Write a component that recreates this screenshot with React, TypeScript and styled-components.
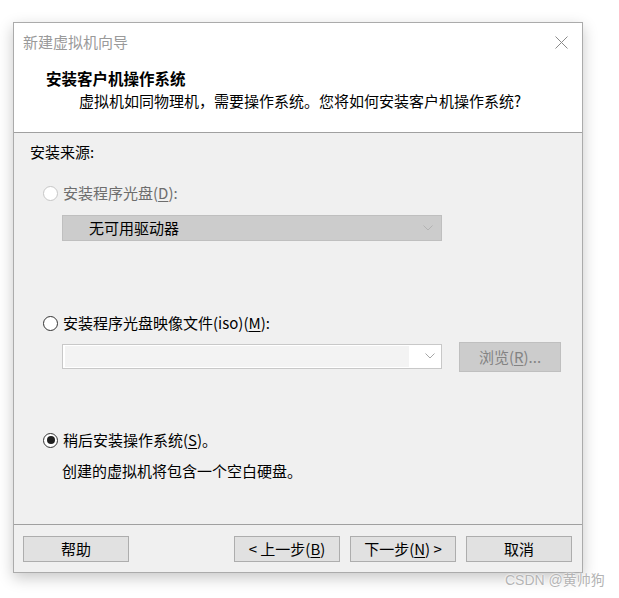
import React from "react";
import styled, { createGlobalStyle } from "styled-components";

const GlobalStyle = createGlobalStyle`
  html, body { margin: 0; padding: 0; background: #ffffff; }
  body { font-family: "Noto Sans CJK SC", "Microsoft YaHei", sans-serif; }
`;

const FONT = `"Noto Sans CJK SC", "Noto Sans", sans-serif`;

const Page = styled.div`
  position: relative;
  width: 619px;
  height: 598px;
  padding: 22px 0 0 13px;
  box-sizing: border-box;
  font-family: ${FONT};
`;

const Window = styled.div`
  width: 570px;
  height: 551px;
  box-sizing: border-box;
  border: 1px solid #ababab;
  box-shadow: 0 5px 14px rgba(0, 0, 0, 0.22);
  display: flex;
  flex-direction: column;
  background: #f0f0f0;
`;

const Header = styled.div`
  background: #ffffff;
  border-bottom: 1px solid #a0a0a0;
  padding-bottom: 20px;
  display: flex;
  flex-direction: column;
`;

const TitleBar = styled.div`
  height: 38px;
  display: flex;
  align-items: center;
  justify-content: space-between;
  padding: 0 14px 0 9px;
`;

const TitleText = styled.span`
  font-size: 15px;
  color: #9a9a9a;
  line-height: 20px;
`;

const Heading = styled.div`
  margin: 6px 0 0 32px;
  font-size: 15.5px;
  font-weight: 700;
  line-height: 22px;
  color: #000;
`;

const Desc = styled.div`
  margin: 1px 0 0 65px;
  font-size: 15px;
  line-height: 22px;
  color: #000;
`;

const Body = styled.div`
  flex: 1;
  display: flex;
  flex-direction: column;
  padding: 9px 0 0 16px;
`;

const Label = styled.div<{ $top?: number; $left?: number; $disabled?: boolean }>`
  margin-top: ${(p) => p.$top ?? 0}px;
  margin-left: ${(p) => p.$left ?? 0}px;
  font-size: 15px;
  line-height: 20px;
  color: ${(p) => (p.$disabled ? "#6d6d6d" : "#000")};
`;

const RadioRow = styled.div<{ $top: number; $disabled?: boolean }>`
  margin-top: ${(p) => p.$top}px;
  margin-left: 13px;
  display: flex;
  align-items: center;
  gap: 5px;
  font-size: 15px;
  line-height: 20px;
  color: ${(p) => (p.$disabled ? "#6d6d6d" : "#000")};
`;

const RadioCircle = styled.span<{ $checked?: boolean; $disabled?: boolean }>`
  width: 15px;
  height: 15px;
  box-sizing: border-box;
  border-radius: 50%;
  border: 1px solid ${(p) => (p.$disabled ? "#c6c6c6" : "#333333")};
  background: #ffffff;
  display: flex;
  align-items: center;
  justify-content: center;
  flex: none;
  &::after {
    content: "";
    display: ${(p) => (p.$checked ? "block" : "none")};
    width: 8px;
    height: 8px;
    border-radius: 50%;
    background: #1f1f1f;
  }
`;

const U = styled.span`
  text-decoration: underline;
  text-underline-offset: 2px;
`;

const Combo = styled.div<{ $disabled?: boolean; $top: number }>`
  margin-top: ${(p) => p.$top}px;
  margin-left: 32px;
  width: 380px;
  height: ${(p) => (p.$disabled ? 26 : 25)}px;
  box-sizing: border-box;
  border: 1px solid ${(p) => (p.$disabled ? "#bfbfbf" : "#c8c8c8")};
  background: ${(p) => (p.$disabled ? "#cccccc" : "#ffffff")};
  display: flex;
  align-items: center;
  padding: 0 ${(p) => (p.$disabled ? 8 : 6)}px 0 ${(p) => (p.$disabled ? 26 : 2)}px;
  font-size: 15px;
  color: #000;
  flex: none;
`;

const ComboText = styled.span`
  flex: 1;
  line-height: 20px;
`;

const ComboEdit = styled.span`
  flex: 1;
  height: 21px;
  background: #f3f3f3;
  margin-right: 16px;
`;

const FileRow = styled.div`
  margin-top: 9px;
  display: flex;
  align-items: center;
  gap: 17px;
`;

const FileCombo = styled(Combo)`
  margin-top: 0;
  margin-bottom: 2px;
`;

const Button = styled.button<{ $disabled?: boolean; $w?: number; $h?: number }>`
  width: ${(p) => p.$w ?? 106}px;
  height: ${(p) => p.$h ?? 26}px;
  box-sizing: border-box;
  border: 1px solid ${(p) => (p.$disabled ? "#bfbfbf" : "#adadad")};
  background: ${(p) => (p.$disabled ? "#cccccc" : "#e1e1e1")};
  color: ${(p) => (p.$disabled ? "#838383" : "#000")};
  font-family: ${FONT};
  font-size: 15px;
  line-height: 20px;
  padding: 0;
  margin: 0;
  display: flex;
  align-items: center;
  justify-content: center;
  flex: none;
  white-space: pre;
`;

const Footer = styled.div`
  border-top: 1px solid #a0a0a0;
  height: 48px;
  box-sizing: border-box;
  padding: 11px 10px 0 9px;
  display: flex;
  gap: 10px;
`;

const Spacer = styled.div`
  flex: 1;
`;

const Watermark = styled.div`
  position: absolute;
  left: 505px;
  top: 571px;
  font-family: "Liberation Sans", "Noto Sans CJK SC", sans-serif;
  font-size: 14px;
  line-height: 18px;
  color: #b4b4b4;
  text-shadow: 0 0 2px #fff, 0 0 2px #fff;
  white-space: nowrap;
`;

const Chevron = ({ color }: { color: string }) => (
  <svg width="10" height="6" viewBox="0 0 10 6" style={{ flex: "none" }}>
    <path d="M0.5 0.5 L5 5 L9.5 0.5" fill="none" stroke={color} strokeWidth="1" />
  </svg>
);

const CloseIcon = () => (
  <svg width="13" height="13" viewBox="0 0 13 13">
    <path d="M0.5 0.5 L12.5 12.5 M12.5 0.5 L0.5 12.5" stroke="#8a8a8a" strokeWidth="1" />
  </svg>
);

export default function App() {
  return (
    <Page>
      <GlobalStyle />
      <Window>
        <Header>
          <TitleBar>
            <TitleText>新建虚拟机向导</TitleText>
            <CloseIcon />
          </TitleBar>
          <Heading>安装客户机操作系统</Heading>
          <Desc>虚拟机如同物理机，需要操作系统。您将如何安装客户机操作系统?</Desc>
        </Header>
        <Body>
          <Label>安装来源:</Label>
          <RadioRow $top={21} $disabled>
            <RadioCircle $disabled />
            <span>
              安装程序光盘(<U>D</U>):
            </span>
          </RadioRow>
          <Combo $disabled $top={12}>
            <ComboText>无可用驱动器</ComboText>
            <Chevron color="#b3b3b3" />
          </Combo>
          <RadioRow $top={72}>
            <RadioCircle />
            <span>
              安装程序光盘映像文件(iso)(<U>M</U>):
            </span>
          </RadioRow>
          <FileRow>
            <FileCombo $top={0}>
              <ComboEdit />
              <Chevron color="#a6a6a6" />
            </FileCombo>
            <Button $disabled $w={102} $h={30}>
              浏览(<U>R</U>)...
            </Button>
          </FileRow>
          <RadioRow $top={58}>
            <RadioCircle $checked />
            <span>
              稍后安装操作系统(<U>S</U>)。
            </span>
          </RadioRow>
          <Label $top={11} $left={32}>
            创建的虚拟机将包含一个空白硬盘。
          </Label>
        </Body>
        <Footer>
          <Button>帮助</Button>
          <Spacer />
          <Button>
            {"< 上一步("}<U>B</U>)
          </Button>
          <Button>
            下一步(<U>N</U>){" >"}
          </Button>
          <Button>取消</Button>
        </Footer>
      </Window>
      <Watermark>CSDN @黄帅狗</Watermark>
    </Page>
  );
}
